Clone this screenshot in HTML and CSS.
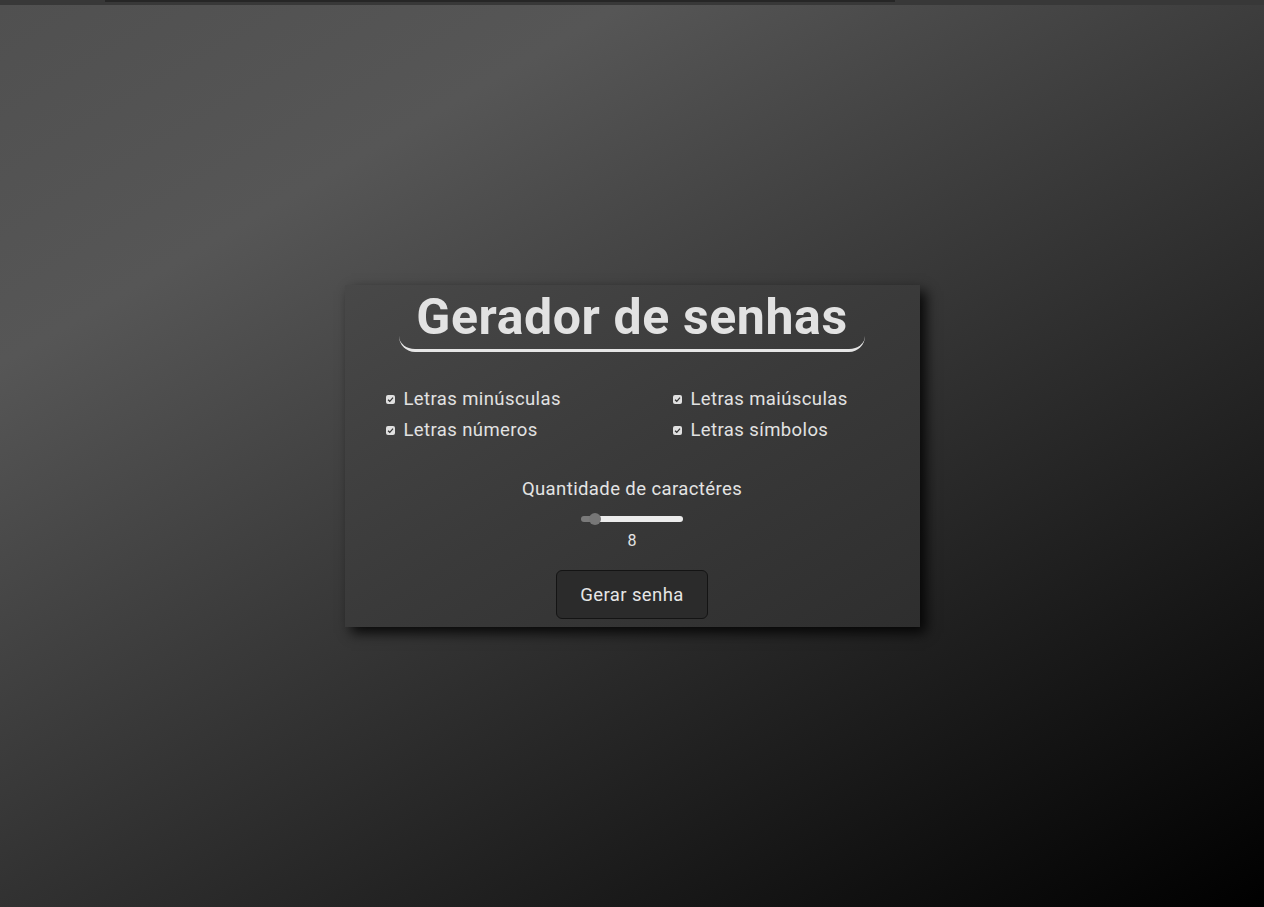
FILE: index.html
```html
<!DOCTYPE html>
<html lang="pt-BR">
<head>
<meta charset="utf-8">
<title>Gerador de senhas</title>
<link rel="stylesheet" href="styles.css">
</head>
<body>
<div class="topbar"><div class="topline"></div></div>
<main class="stage">
  <section class="card">
    <h1 class="title">Gerador de senhas</h1>
    <div class="options">
      <label class="opt"><span class="box"><svg viewBox="0 0 10 10" width="9" height="9"><path d="M2.3 5.2 L4.2 7 L7.8 3" fill="none" stroke="#333" stroke-width="1.4"/></svg></span>Letras minúsculas</label>
      <label class="opt"><span class="box"><svg viewBox="0 0 10 10" width="9" height="9"><path d="M2.3 5.2 L4.2 7 L7.8 3" fill="none" stroke="#333" stroke-width="1.4"/></svg></span>Letras maiúsculas</label>
      <label class="opt"><span class="box"><svg viewBox="0 0 10 10" width="9" height="9"><path d="M2.3 5.2 L4.2 7 L7.8 3" fill="none" stroke="#333" stroke-width="1.4"/></svg></span>Letras números</label>
      <label class="opt"><span class="box"><svg viewBox="0 0 10 10" width="9" height="9"><path d="M2.3 5.2 L4.2 7 L7.8 3" fill="none" stroke="#333" stroke-width="1.4"/></svg></span>Letras símbolos</label>
    </div>
    <div class="qty">
      <div class="qty-label">Quantidade de caractéres</div>
      <input class="range" type="range" min="4" max="50" value="8">
      <div class="qty-value">8</div>
    </div>
    <button class="btn">Gerar senha</button>
  </section>
</main>
</body>
</html>
```
FILE: styles.css
```css
html, body {
  margin: 0;
  padding: 0;
  height: 100%;
}
body {
  font-family: Roboto, "Liberation Sans", sans-serif;
  color: #e4e4e4;
  background: #2a2a2a;
  display: flex;
  flex-direction: column;
  overflow: hidden;
}
.topbar {
  height: 5px;
  background: #383838;
  flex: none;
}
.topline {
  margin-left: 105px;
  width: 790px;
  height: 2px;
  background: #262626;
}
.stage {
  flex: 1;
  display: flex;
  align-items: center;
  justify-content: center;
  background: linear-gradient(150deg, #505050 0%, #565656 22%, #000 100%);
}
.card {
  width: 575px;
  height: 342px;
  box-sizing: border-box;
  padding-top: 4px;
  display: flex;
  flex-direction: column;
  align-items: center;
  background: linear-gradient(150deg, #484848 0%, #3a3a3a 50%, #2e2e2e 100%);
  box-shadow: 6px 6px 12px rgba(0, 0, 0, 0.85);
}
.title {
  margin: 0;
  font-size: 50px;
  letter-spacing: 0.6px;
  line-height: 56px;
  font-weight: 700;
  color: #e2e2e2;
  padding: 0 17px 4px;
  border-bottom: 3px solid #e6e6e6;
  border-radius: 0 0 16px 16px;
}
.options {
  align-self: stretch;
  margin-top: 37px;
  padding-left: 41px;
  display: grid;
  grid-template-columns: 287px 1fr;
  row-gap: 10px;
}
.opt {
  display: flex;
  align-items: center;
  font-size: 18.5px;
  letter-spacing: 0.4px;
  line-height: 21px;
  color: #e2e2e2;
}
.box {
  width: 9px;
  height: 9px;
  background: #e0e0e0;
  border-radius: 2px;
  margin-right: 9px;
  display: flex;
}
.qty {
  margin-top: 38px;
  display: flex;
  flex-direction: column;
  align-items: center;
}
.qty-label {
  font-size: 18.5px;
  letter-spacing: 0.4px;
  line-height: 21px;
}
.range {
  -webkit-appearance: none;
  appearance: none;
  width: 102px;
  height: 6px;
  margin: 16px 0 0;
  border-radius: 3px;
  background: linear-gradient(to right, #7a7a7a 0 13%, #ececec 13% 100%);
  outline: none;
}
.range::-webkit-slider-thumb {
  -webkit-appearance: none;
  appearance: none;
  width: 12px;
  height: 12px;
  border-radius: 50%;
  background: #777;
  border: none;
}
.qty-value {
  margin-top: 9px;
  font-size: 16px;
  line-height: 19px;
}
.btn {
  margin-top: 20px;
  width: 152px;
  height: 49px;
  border: 1px solid #141414;
  border-radius: 6px;
  background: #2b2b2b;
  color: #e6e6e6;
  font-family: Roboto, "Liberation Sans", sans-serif;
  font-size: 18.5px;
  letter-spacing: 0.4px;
}
```
